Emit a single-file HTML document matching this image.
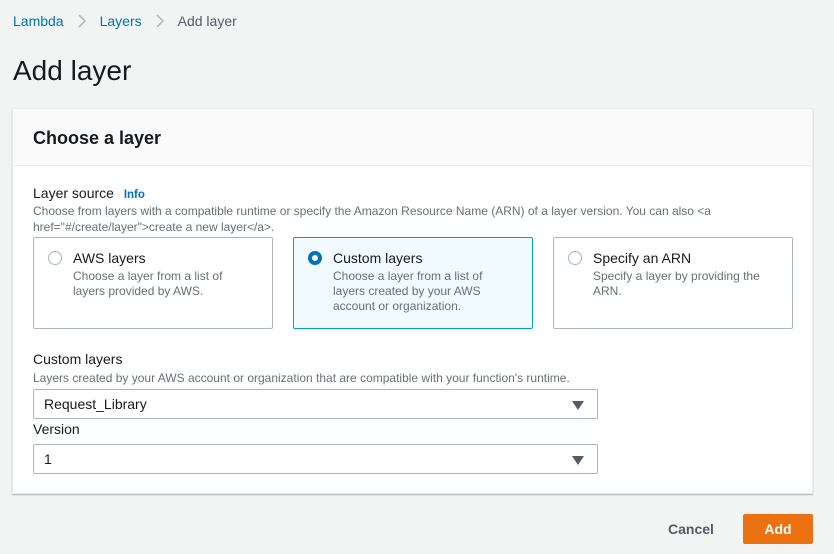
<!DOCTYPE html>
<html><head><style>
*{box-sizing:border-box;margin:0;padding:0}
body{width:834px;height:554px;background:#f2f3f3;font-family:"Liberation Sans",sans-serif;color:#16191f;position:relative;overflow:hidden}
.a{position:absolute}
.bc{top:13px;font-size:14px;left:13px;color:#545b64;display:flex;align-items:center}
.bc span.l{color:#0073bb}
.bc svg{margin:0 14px}
h1{position:absolute;left:13px;top:55px;font-size:28px;font-weight:normal;color:#16191f}
.panel{left:12px;top:108px;width:801px;height:386px;background:#fff;border:1px solid #eaeded;box-shadow:0 1px 1px rgba(0,28,36,.3)}
.hd{height:57px;background:#fafafa;border-bottom:1px solid #eaeded;padding:19px 20px;font-weight:bold;font-size:18px}
.lbl{font-size:14px;color:#16191f}
.desc{font-size:12px;color:#687078;line-height:16px}
.card{top:128px;width:240px;height:92px;border:1px solid #aab7b8;border-radius:2px;padding:12px 14px 0 39px}
.card.sel{background:#f1faff;border-color:#00a1c9}
.card .t{font-size:14px;margin-bottom:3px}
.card .d{font-size:12px;color:#687078;line-height:15px;width:180px}
.r{position:absolute;left:14px;top:13px;width:14px;height:14px;border:1px solid #aab7b8;border-radius:50%;background:#fff}
.r.on{border:4px solid #0073bb}
.sel2{left:20px;width:565px;height:30px;border:1px solid #aab7b8;border-radius:2px;font-size:14px;padding:6px 10px}
.tri{position:absolute;right:13px;top:11px;width:0;height:0;border-left:6px solid transparent;border-right:6px solid transparent;border-top:9px solid #545b64}
</style></head><body>
<div class="a bc"><span class="l">Lambda</span><svg width="8" height="14"><path d="M1 1 L7 7 L1 13" fill="none" stroke="#aab7b8" stroke-width="1.5"/></svg><span class="l">Layers</span><svg width="8" height="14"><path d="M1 1 L7 7 L1 13" fill="none" stroke="#aab7b8" stroke-width="1.5"/></svg>Add layer</div>
<h1>Add layer</h1>
<div class="a panel">
<div class="hd">Choose a layer</div>
<div class="a lbl" style="left:20px;top:76px">Layer source <b style="color:#0073bb;font-size:11.5px;margin-left:6px">Info</b></div>
<div class="a desc" style="left:20px;top:94px;width:700px">Choose from layers with a compatible runtime or specify the Amazon Resource Name (ARN) of a layer version. You can also &lt;a href="#/create/layer"&gt;create a new layer&lt;/a&gt;.</div>
<div class="a card" style="left:20px"><div class="r"></div><div class="t">AWS layers</div><div class="d">Choose a layer from a list of layers provided by AWS.</div></div>
<div class="a card sel" style="left:280px"><div class="r on"></div><div class="t">Custom layers</div><div class="d">Choose a layer from a list of layers created by your AWS account or organization.</div></div>
<div class="a card" style="left:540px"><div class="r"></div><div class="t">Specify an ARN</div><div class="d">Specify a layer by providing the ARN.</div></div>
<div class="a lbl" style="left:20px;top:242px">Custom layers</div>
<div class="a desc" style="left:20px;top:261px">Layers created by your AWS account or organization that are compatible with your function's runtime.</div>
<div class="a sel2" style="top:280px">Request_Library<div class="tri"></div></div>
<div class="a lbl" style="left:20px;top:312px">Version</div>
<div class="a sel2" style="top:335px">1<div class="tri"></div></div>
</div>
<div class="a" style="left:668px;top:521px;font-weight:bold;font-size:14px;color:#545b64">Cancel</div>
<div class="a" style="left:743px;top:514px;width:70px;height:30px;background:#ec7211;border-radius:2px;color:#fff;font-weight:bold;font-size:14px;text-align:center;line-height:30px">Add</div>
</body></html>
